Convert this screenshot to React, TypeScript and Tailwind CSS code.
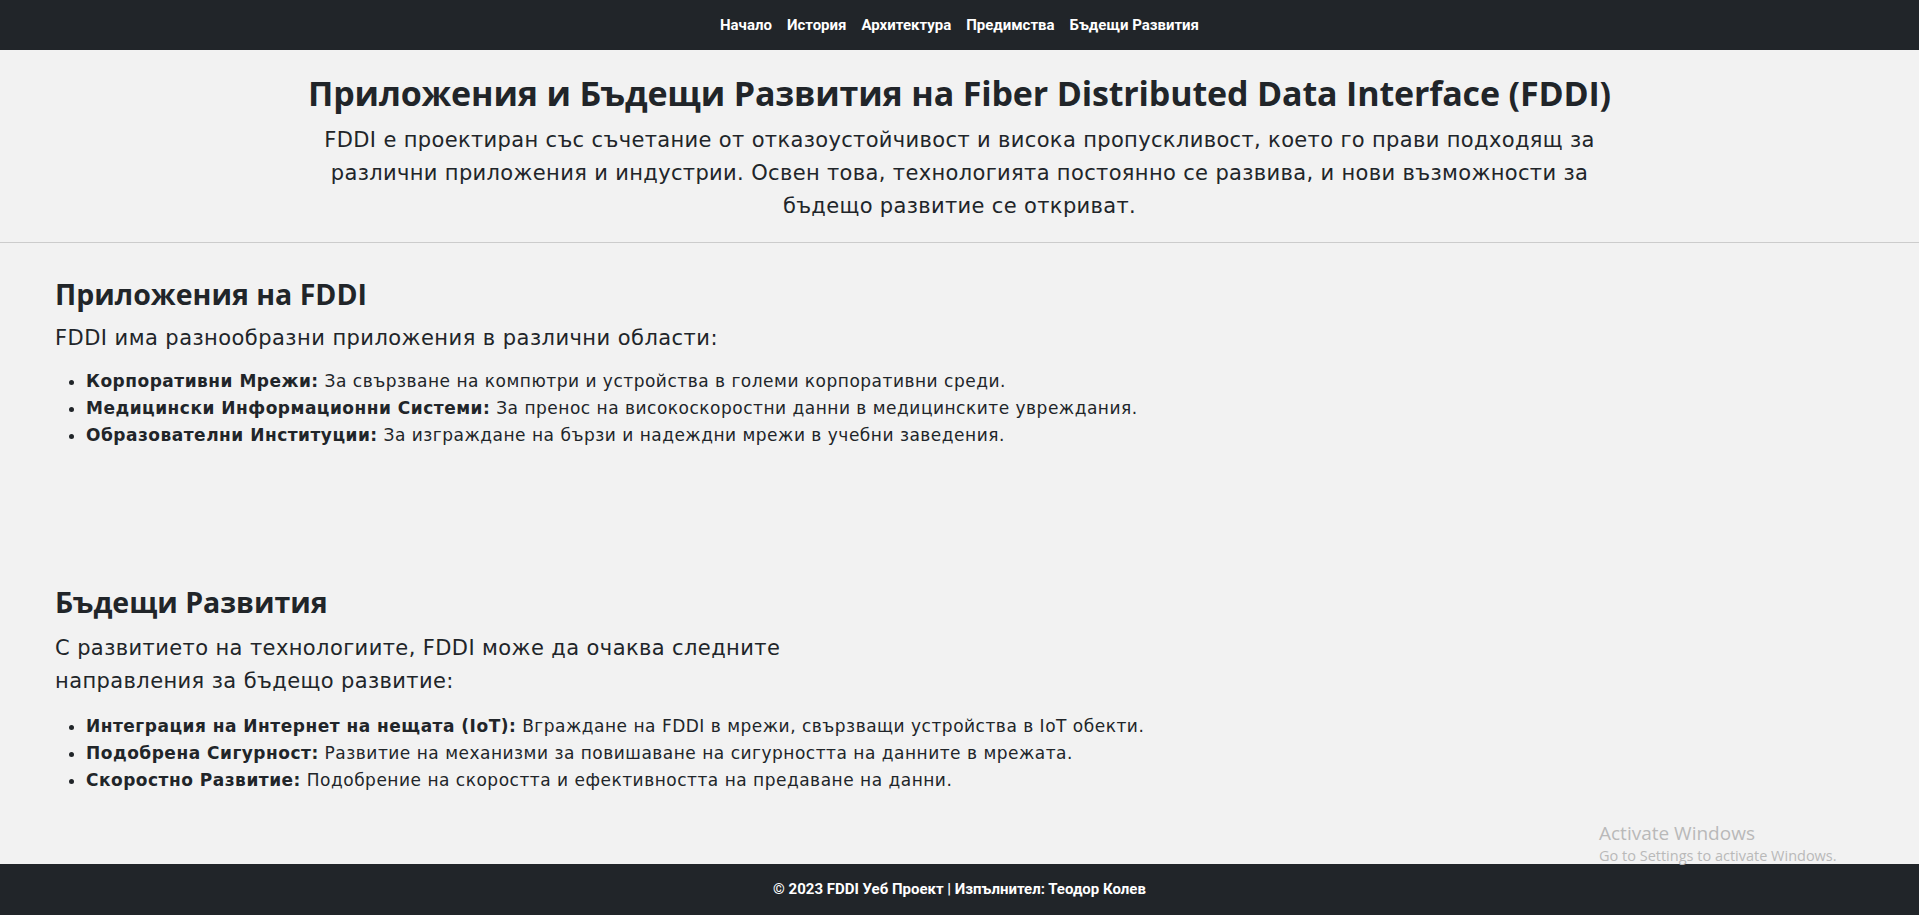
import React from "react";

const navLinks = ["Начало", "История", "Архитектура", "Предимства", "Бъдещи Развития"];

const applications = [
  {
    title: "Корпоративни Мрежи:",
    text: "За свързване на компютри и устройства в големи корпоративни среди.",
  },
  {
    title: "Медицински Информационни Системи:",
    text: "За пренос на високоскоростни данни в медицинските увреждания.",
  },
  {
    title: "Образователни Институции:",
    text: "За изграждане на бързи и надеждни мрежи в учебни заведения.",
  },
];

const future = [
  {
    title: "Интеграция на Интернет на нещата (IoT):",
    text: "Вграждане на FDDI в мрежи, свързващи устройства в IoT обекти.",
  },
  {
    title: "Подобрена Сигурност:",
    text: "Развитие на механизми за повишаване на сигурността на данните в мрежата.",
  },
  {
    title: "Скоростно Развитие:",
    text: "Подобрение на скоростта и ефективността на предаване на данни.",
  },
];

const headingFont = "font-['Open_Sans','Noto_Sans',sans-serif]";
const bodyFont = "font-['DejaVu_Sans','Verdana',sans-serif]";

const App = () => {
  return (
    <div className="relative min-h-screen flex flex-col bg-[#f2f2f2] text-[#212529]">
      {/* top navigation */}
      <nav className="h-[50px] bg-[#212529] flex items-center justify-center">
        <ul className="flex items-center gap-[15px] font-['Roboto',sans-serif] font-bold text-[15px] text-white">
          {navLinks.map((link) => (
            <li key={link}>
              <a href="#" className="hover:underline">
                {link}
              </a>
            </li>
          ))}
        </ul>
      </nav>

      {/* header */}
      <header className="pt-[23px] pb-[19px] border-b border-[#cccccc] text-center">
        <h1 className={`${headingFont} font-bold text-[34px] leading-[40px] tracking-[-0.15px]`}>
          Приложения и Бъдещи Развития на Fiber Distributed Data Interface (FDDI)
        </h1>
        <p className={`${bodyFont} mt-[11px] mx-auto max-w-[1300px] text-[21px] leading-[33px] tracking-[0.35px]`}>
          FDDI е проектиран със съчетание от отказоустойчивост и висока пропускливост, което го прави подходящ за различни приложения и индустрии. Освен това, технологията постоянно се развива, и нови възможности за бъдещо развитие се откриват.
        </p>
      </header>

      {/* content */}
      <main className="flex-1 px-[55px]">
        <section className="pt-[33px]">
          <h2 className={`${headingFont} font-bold text-[28.5px] leading-[36px]`}>Приложения на FDDI</h2>
          <p className={`${bodyFont} mt-[10px] text-[21px] leading-[33px] tracking-[0.45px]`}>
            FDDI има разнообразни приложения в различни области:
          </p>
          <ul className={`${bodyFont} mt-[13px] pl-[31px] list-disc text-[17px] leading-[27px] tracking-[0.5px]`}>
            {applications.map((item) => (
              <li key={item.title}>
                <strong>{item.title}</strong> {item.text}
              </li>
            ))}
          </ul>
        </section>

        <section className="mt-[135px]">
          <h2 className={`${headingFont} font-bold text-[28.5px] leading-[36px]`}>Бъдещи Развития</h2>
          <p className={`${bodyFont} mt-[12px] max-w-[800px] text-[21px] leading-[33px] tracking-[0.4px]`}>
            С развитието на технологиите, FDDI може да очаква следните направления за бъдещо развитие:
          </p>
          <ul className={`${bodyFont} mt-[15px] pl-[31px] list-disc text-[17px] leading-[27px] tracking-[0.5px]`}>
            {future.map((item) => (
              <li key={item.title}>
                <strong>{item.title}</strong> {item.text}
              </li>
            ))}
          </ul>
        </section>
      </main>

      {/* footer */}
      <footer className="h-[51px] bg-[#212529] flex items-center justify-center font-['Roboto',sans-serif] font-bold text-[15px] text-white">
        © 2023 FDDI Уеб Проект | Изпълнител: Теодор Колев
      </footer>

      {/* windows watermark */}
      <div className="absolute left-[1599px] bottom-[50px] pointer-events-none font-['Open_Sans',sans-serif] text-[#b9b9b9]">
        <div className="text-[19px] leading-[28px]">Activate Windows</div>
        <div className="text-[14.5px] leading-[18px]">Go to Settings to activate Windows.</div>
      </div>
    </div>
  );
};

export default App;
